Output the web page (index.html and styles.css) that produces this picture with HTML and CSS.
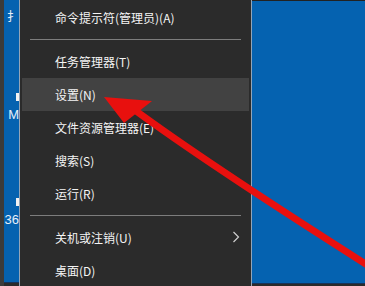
FILE: index.html
```html
<!DOCTYPE html>
<html lang="zh-CN">
<head>
  <meta charset="UTF-8">
  <meta name="viewport" content="width=device-width, initial-scale=1.0">
  <title>开始菜单</title>
  <link rel="stylesheet" href="styles.css">
</head>
<body>
  <div class="edge"></div>

  <div class="desk desk-left">
    <span class="desk-label first">扌</span>
    <span class="desk-icon"></span>
    <span class="desk-label">M</span>
    <span class="desk-icon second"></span>
    <span class="desk-label">36</span>
  </div>

  <div class="rule"></div>

  <ul class="menu">
    <li class="item">命令提示符(管理员)(A)</li>
    <li class="sep"></li>
    <li class="item">任务管理器(T)</li>
    <li class="item active">设置(N)</li>
    <li class="item">文件资源管理器(E)</li>
    <li class="item">搜索(S)</li>
    <li class="item">运行(R)</li>
    <li class="sep"></li>
    <li class="item has-sub">关机或注销(U)
      <svg class="chevron" width="8" height="12" viewBox="0 0 8 12"><path d="M1.5 1 L6.5 6 L1.5 11" fill="none" stroke="#cfcfcf" stroke-width="1.2"/></svg>
    </li>
    <li class="item">桌面(D)</li>
  </ul>

  <div class="rule"></div>

  <div class="desk desk-right"></div>

  <!-- red annotation arrow drawn over the screenshot -->
  <svg class="arrow" width="365" height="286" viewBox="0 0 365 286">
    <path d="M132 108 Q 205 162 372 268" fill="none" stroke="#e8100e" stroke-width="7"/>
    <polygon points="104,97 152,101 124,123" fill="#e8100e"/>
  </svg>
</body>
</html>
```

FILE: styles.css
```css
body {
  margin: 0;
  width: 365px;
  height: 286px;
  overflow: hidden;
  display: flex;
  position: relative;
  background: #2b2b2b;
  font-family: "Noto Sans CJK SC", "Microsoft YaHei", sans-serif;
  color: #fff;
}
.edge {
  width: 4px;
  background: #3b3b3b;
}
.desk {
  height: 282px;
  background: #0562b0;
  border-bottom: 1px solid #18345a;
}
.desk-left {
  width: 15px;
  display: flex;
  flex-direction: column;
  align-items: flex-end;
  overflow: hidden;
}
.desk-label {
  font-family: "Liberation Sans", Arial, sans-serif;
  font-size: 13px;
  line-height: 14px;
  color: #e8f0fa;
  white-space: nowrap;
}
.desk-label.first {
  margin-top: 9px;
  font-family: "Noto Sans CJK SC", sans-serif;
  font-size: 12px;
}
.desk-icon {
  width: 3px;
  height: 8px;
  margin-top: 70px;
  margin-bottom: 7px;
  background: #f2f2f2;
}
.desk-icon.second {
  margin-top: 76px;
  margin-bottom: 7px;
}
.rule {
  width: 1px;
  background: #93a5b8;
}
.menu {
  width: 231px;
  margin: 0;
  padding: 1px 0 0;
  list-style: none;
  background: #2b2b2b;
}
.item {
  position: relative;
  height: 33px;
  line-height: 33px;
  margin: 0 2px;
  padding-left: 33px;
  font-size: 12px;
  color: #f4f4f4;
  white-space: nowrap;
}
.item.active {
  background: #424242;
}
.sep {
  height: 11px;
  display: flex;
  align-items: center;
  padding: 0 10px;
}
.sep::before {
  content: "";
  flex: 1;
  height: 1px;
  background: #7d7d7d;
}
.chevron {
  position: absolute;
  right: 9px;
  top: 10px;
}
.desk-right {
  flex: 1;
  border-top: 1px solid #222;
}
.arrow {
  position: absolute;
  left: 0;
  top: 0;
  pointer-events: none;
}
```
